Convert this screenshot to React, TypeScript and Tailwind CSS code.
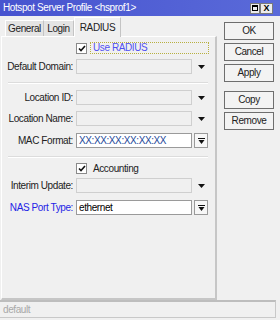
import React from "react"

const font = "font-['Liberation_Sans','Arial',sans-serif]"

function Arrow() {
  return (
    <div className="ml-[2px] flex h-full w-[14px] items-center justify-center">
      <svg width="7" height="4" viewBox="0 0 7 4">
        <path d="M0 0 H7 L3.5 4 Z" fill="#111" />
      </svg>
    </div>
  )
}

function DropButton() {
  return (
    <div className="ml-[2px] flex h-full w-[14px] items-center justify-center border border-[#9a9a9a] bg-[#f7f7f7]">
      <svg width="7" height="6" viewBox="0 0 7 6">
        <rect x="0" y="0" width="7" height="1" fill="#111" />
        <path d="M0.5 2 H6.5 L3.5 6 Z" fill="#111" />
      </svg>
    </div>
  )
}

function Field({
  label,
  value,
  enabled,
  blue,
  button,
  valueClass,
  className,
}: {
  label: string
  value?: string
  enabled?: boolean
  blue?: boolean
  button?: boolean
  valueClass?: string
  className: string
}) {
  return (
    <div className={`flex h-[15px] items-center ${className}`}>
      <div
        className={`w-[71px] shrink-0 whitespace-nowrap text-right leading-none ${blue ? "text-[#2424e6]" : "text-[#222]"}`}
      >
        {label}
      </div>
      <div
        className={`ml-[3px] flex h-full w-[116px] items-center whitespace-nowrap px-[2px] leading-none ${
          enabled ? "border border-[#9a9a9a] bg-white" : "border border-[#cfcfcf] bg-[#f0f0f0]"
        } ${valueClass ?? ""}`}
      >
        {value}
      </div>
      {button ? <DropButton /> : <Arrow />}
    </div>
  )
}

function Check({ label, focus, className }: { label: string; focus?: boolean; className: string }) {
  return (
    <div className={`flex items-center ${className}`}>
      <div className="ml-[74px] flex h-[11px] w-[11px] items-center justify-center border border-[#8a8a8a] bg-white">
        <svg width="8" height="7" viewBox="0 0 8 7">
          <path d="M1 3.5 L3 5.5 L7 1" stroke="#111" strokeWidth="1.6" fill="none" />
        </svg>
      </div>
      {focus ? (
        <div className="ml-[3px] flex h-[12px] w-[119px] items-center border border-dotted border-[#b8b040] pl-[2px] leading-none text-[#5050f0]">
          {label}
        </div>
      ) : (
        <div className="ml-[6px] leading-none text-[#222]">{label}</div>
      )}
    </div>
  )
}

function Separator({ className }: { className: string }) {
  return (
    <div className={`ml-[6px] w-[200px] ${className}`}>
      <div className="h-px bg-[#dcdcdc]" />
      <div className="h-px bg-white" />
    </div>
  )
}

function SideButton({ label, className }: { label: string; className?: string }) {
  return (
    <div
      className={`flex h-[18px] w-[50px] items-center justify-center border border-[#6e6e6e] bg-[#f3f3f3] leading-none text-[#222] ${className ?? ""}`}
    >
      {label}
    </div>
  )
}

export default function App() {
  return (
    <div
      className={`flex h-[320px] w-[280px] flex-col overflow-hidden bg-[#f0f0f0] text-[10px] tracking-[-0.4px] text-black ${font}`}
    >
      {/* title bar */}
      <div className="flex h-[16px] items-center bg-gradient-to-r from-[#4753cf] to-[#5a6ad9] pl-[3px] pr-[7px]">
        <div className="flex-1 whitespace-nowrap leading-none text-white">Hotspot Server Profile &lt;hsprof1&gt;</div>
        <div className="flex h-[11px] w-[10px] items-center justify-center border border-[#7a7a7a] bg-[#ececec]">
          <div className="h-[6px] w-[6px] border border-black border-t-2" />
        </div>
        <div className="flex h-[11px] w-[13px] items-center justify-center border border-[#7a7a7a] bg-[#ececec] text-[9px] font-bold leading-none tracking-normal">
          X
        </div>
      </div>

      <div className="flex h-[284px]">
        {/* left side: tabs + panel */}
        <div className="ml-[1px] flex w-[216px] flex-col">
          <div className="flex h-[20px] items-end pl-[4px]">
            <div className="flex h-[16px] w-[39px] items-center justify-center border-l border-t border-r border-l-white border-t-white border-r-[#c4c4c4] bg-[#e4e4e4] leading-none text-[#222]">
              General
            </div>
            <div className="flex h-[16px] w-[30px] items-center justify-center border-t border-r border-t-white border-r-[#c4c4c4] bg-[#e4e4e4] leading-none text-[#222]">
              Login
            </div>
            <div className="relative -mb-px flex h-[20px] w-[47px] items-center justify-center border-l border-t border-r border-l-white border-t-white border-r-[#c4c4c4] bg-[#f0f0f0] leading-none text-[#222]">
              RADIUS
            </div>
          </div>
          <div className="flex flex-1 flex-col border-l border-t border-l-white border-t-white border-r-2 border-b-2 border-r-[#c6c6c6] border-b-[#c6c6c6]">
            <Check label="Use RADIUS" focus className="mt-[5px] h-[12px]" />
            <Field label="Default Domain:" className="mt-[5px]" />
            <Separator className="mt-[8px]" />
            <Field label="Location ID:" className="mt-[6px]" />
            <Field label="Location Name:" className="mt-[6px]" />
            <Field
              label="MAC Format:"
              value="XX:XX:XX:XX:XX:XX"
              enabled
              button
              valueClass="text-[#24489a]"
              className="mt-[7px]"
            />
            <Separator className="mt-[8px]" />
            <Check label="Accounting" className="mt-[4px] h-[13px]" />
            <Field label="Interim Update:" className="mt-[3px]" />
            <Field label="NAS Port Type:" value="ethernet" enabled blue button className="mt-[7px]" />
          </div>
        </div>

        {/* right side buttons */}
        <div className="ml-[7px] flex flex-col pt-[6px]">
          <SideButton label="OK" className="border-[#4a4a4a]" />
          <SideButton label="Cancel" className="mt-[3px]" />
          <SideButton label="Apply" className="mt-[3px]" />
          <SideButton label="Copy" className="mt-[9px]" />
          <SideButton label="Remove" className="mt-[3px]" />
        </div>
      </div>

      {/* status bar */}
      <div className="flex h-[18px] w-[276px] items-center border-t-2 border-r border-b border-t-[#bdbdbd] border-r-[#c8c8c8] border-b-[#c8c8c8] pl-[3px] leading-none text-[#a8a8a8]">
        default
      </div>
    </div>
  )
}
